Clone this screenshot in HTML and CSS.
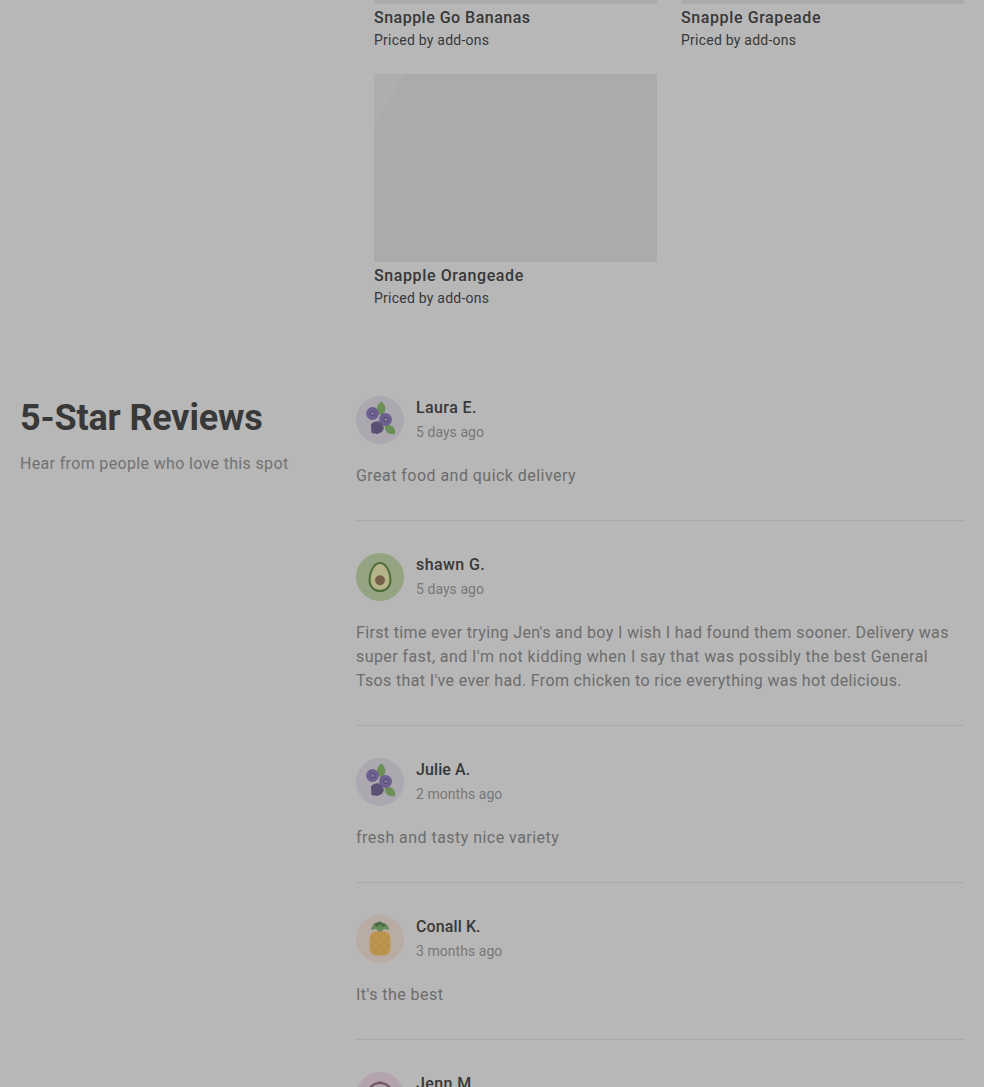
FILE: index.html
```html
<!DOCTYPE html>
<html lang="en">
<head>
<meta charset="utf-8">
<title>5-Star Reviews</title>
<link rel="stylesheet" href="styles.css">
</head>
<body>
<svg class="sprites" width="0" height="0" aria-hidden="true">
  <symbol id="berries" viewBox="0 0 48 48">
    <circle cx="24" cy="24" r="24" fill="#aba9af"/>
    <path d="M25 20C19 15 20 9 25.500 5.500C30 9 31.500 16 25 20Z" fill="#6b8f56"/>
    <path d="M29 29C36 28 40 32 39 38C34 39 28 37 29 29Z" fill="#6b8f56"/>
    <circle cx="16.500" cy="17.500" r="6.400" fill="#6d6091"/>
    <circle cx="29.500" cy="23.500" r="6.500" fill="#6d6091"/>
    <path d="M15 28L18 26L22 25L26 28L28 32L26 36L21 38L15.500 37Z" fill="#5b4f73"/>
    <g fill="#85779f" stroke="#51466f" stroke-width="1">
      <circle cx="16.500" cy="17.500" r="2.200"/><circle cx="30" cy="23.500" r="2.200"/>
    </g>
  </symbol>
  <symbol id="avocado" viewBox="0 0 48 48">
    <circle cx="24" cy="24" r="24" fill="#94a381"/>
    <path d="M24 10C17.500 10 13.500 20 13.500 27C13.500 33.500 18 38 24 38S34.500 33.500 34.500 27C34.500 20 30.500 10 24 10Z" fill="#b4b488" stroke="#4b6d39" stroke-width="2"/>
    <circle cx="24" cy="27.300" r="5" fill="#775f49"/>
  </symbol>
  <symbol id="pineapple" viewBox="0 0 48 48">
    <circle cx="24" cy="24" r="24" fill="#b8aca4"/>
    <path d="M15 15C16 10 19 7 22 7L24 6L27 8C31 8 33 12 33 15L28 14L24 18L20 14Z" fill="#668b58"/>
    <path d="M18 9L24 7L30 10L27 12L24 9L21 12Z" fill="#496747"/>
    <rect x="13.500" y="16.500" width="21" height="24" rx="7" fill="#bc964f"/>
    <path d="M15 22L31 38M15 30L24 39M20 18L34 32M26 17L34 25M33 22L17 38M34 30L25 39M28 18L14 32M22 17L14 25" stroke="#ad8945" stroke-width=".7"/>
  </symbol>
  <symbol id="mangosteen" viewBox="0 0 48 48">
    <circle cx="24" cy="24" r="24" fill="#b2a3ad"/>
    <circle cx="24" cy="24" r="13" fill="#b2a4ad" stroke="#705367" stroke-width="2"/>
    <path d="M20 12L24 9L28 12Z" fill="#705367"/>
  </symbol>
</svg>
<main class="page">
  <section class="products">
    <article class="product"><div class="photo photo-cut"></div><h3 class="product-name">Snapple Go Bananas</h3><p class="price">Priced by add-ons</p></article>
    <article class="product"><div class="photo photo-cut"></div><h3 class="product-name product-name-wide">Snapple Grapeade</h3><p class="price">Priced by add-ons</p></article>
    <article class="product"><div class="photo photo-full"></div><h3 class="product-name product-name-wide">Snapple Orangeade</h3><p class="price">Priced by add-ons</p></article>
  </section>
  <section class="reviews">
    <header class="intro">
      <h2 class="heading">5-Star Reviews</h2>
      <p class="tagline">Hear from people who love this spot</p>
    </header>
    <div class="list">
      <article class="review">
        <div class="author"><svg class="avatar"><use href="#berries"/></svg><div><h4 class="name">Laura E.</h4><p class="date">5 days ago</p></div></div>
        <p class="comment comment-short">Great food and quick delivery</p>
      </article>
      <article class="review">
        <div class="author"><svg class="avatar"><use href="#avocado"/></svg><div><h4 class="name">shawn G.</h4><p class="date">5 days ago</p></div></div>
        <p class="comment">First time ever trying Jen's and boy I wish I had found them sooner. Delivery was<br><span class="line-wide">super fast, and I'm not kidding when I say that was possibly the best General</span><br>Tsos that I've ever had. From chicken to rice everything was hot delicious.</p>
      </article>
      <article class="review">
        <div class="author"><svg class="avatar"><use href="#berries"/></svg><div><h4 class="name name-tight">Julie A.</h4><p class="date">2 months ago</p></div></div>
        <p class="comment comment-short">fresh and tasty nice variety</p>
      </article>
      <article class="review">
        <div class="author"><svg class="avatar"><use href="#pineapple"/></svg><div><h4 class="name name-tight">Conall K.</h4><p class="date">3 months ago</p></div></div>
        <p class="comment comment-short">It's the best</p>
      </article>
      <article class="review">
        <div class="author"><svg class="avatar"><use href="#mangosteen"/></svg><div><h4 class="name">Jenn M.</h4></div></div>
      </article>
    </div>
  </section>
</main>
</body>
</html>
```
FILE: styles.css
```css
* { box-sizing: border-box; margin: 0; padding: 0; }
body { background: #b7b7b7; color: #383838; font-family: Roboto, "Liberation Sans", sans-serif; }
.sprites { display: block; }
.page { height: 1087px; overflow: hidden; padding: 0 20px; }
.products { display: grid; grid-template-columns: 283px 283px; column-gap: 24px; row-gap: 24px; margin-left: 354px; }
.photo { background: #ababab; }
.photo-cut { height: 4px; }
.photo-full { height: 188px; background: linear-gradient(119deg, #aeaeae 0 7.500%, #ababab 8%); }
.product-name { font-size: 16px; font-weight: 500; line-height: 24px; padding-top: 2px; letter-spacing: .48px; white-space: nowrap; }
.product-name-wide { letter-spacing: .6px; }
.price { font-size: 14px; line-height: 20px; letter-spacing: .23px; }
.reviews { display: grid; grid-template-columns: 336px 608px; margin-top: 88px; }
.heading { font-size: 36px; font-weight: 700; line-height: 44px; letter-spacing: -.17px; white-space: nowrap; }
.tagline { margin-top: 12px; font-size: 16px; line-height: 24px; letter-spacing: .34px; color: #727272; white-space: nowrap; }
.review { border-bottom: 1px solid #a9a9a9; padding-bottom: 32px; margin-bottom: 32px; }
.author { display: flex; gap: 12px; height: 48px; }
.avatar { display: block; width: 48px; height: 48px; flex: none; }
.name { font-size: 16px; font-weight: 500; line-height: 24px; letter-spacing: .4px; white-space: nowrap; }
.name-tight { letter-spacing: .1px; }
.date { font-size: 14px; line-height: 24px; letter-spacing: .05px; color: #777; white-space: nowrap; }
.comment { margin-top: 20px; font-size: 16px; line-height: 24px; letter-spacing: .35px; color: #6c6c6c; white-space: nowrap; }
.comment-short { letter-spacing: .46px; }
.line-wide { letter-spacing: .42px; }
```
